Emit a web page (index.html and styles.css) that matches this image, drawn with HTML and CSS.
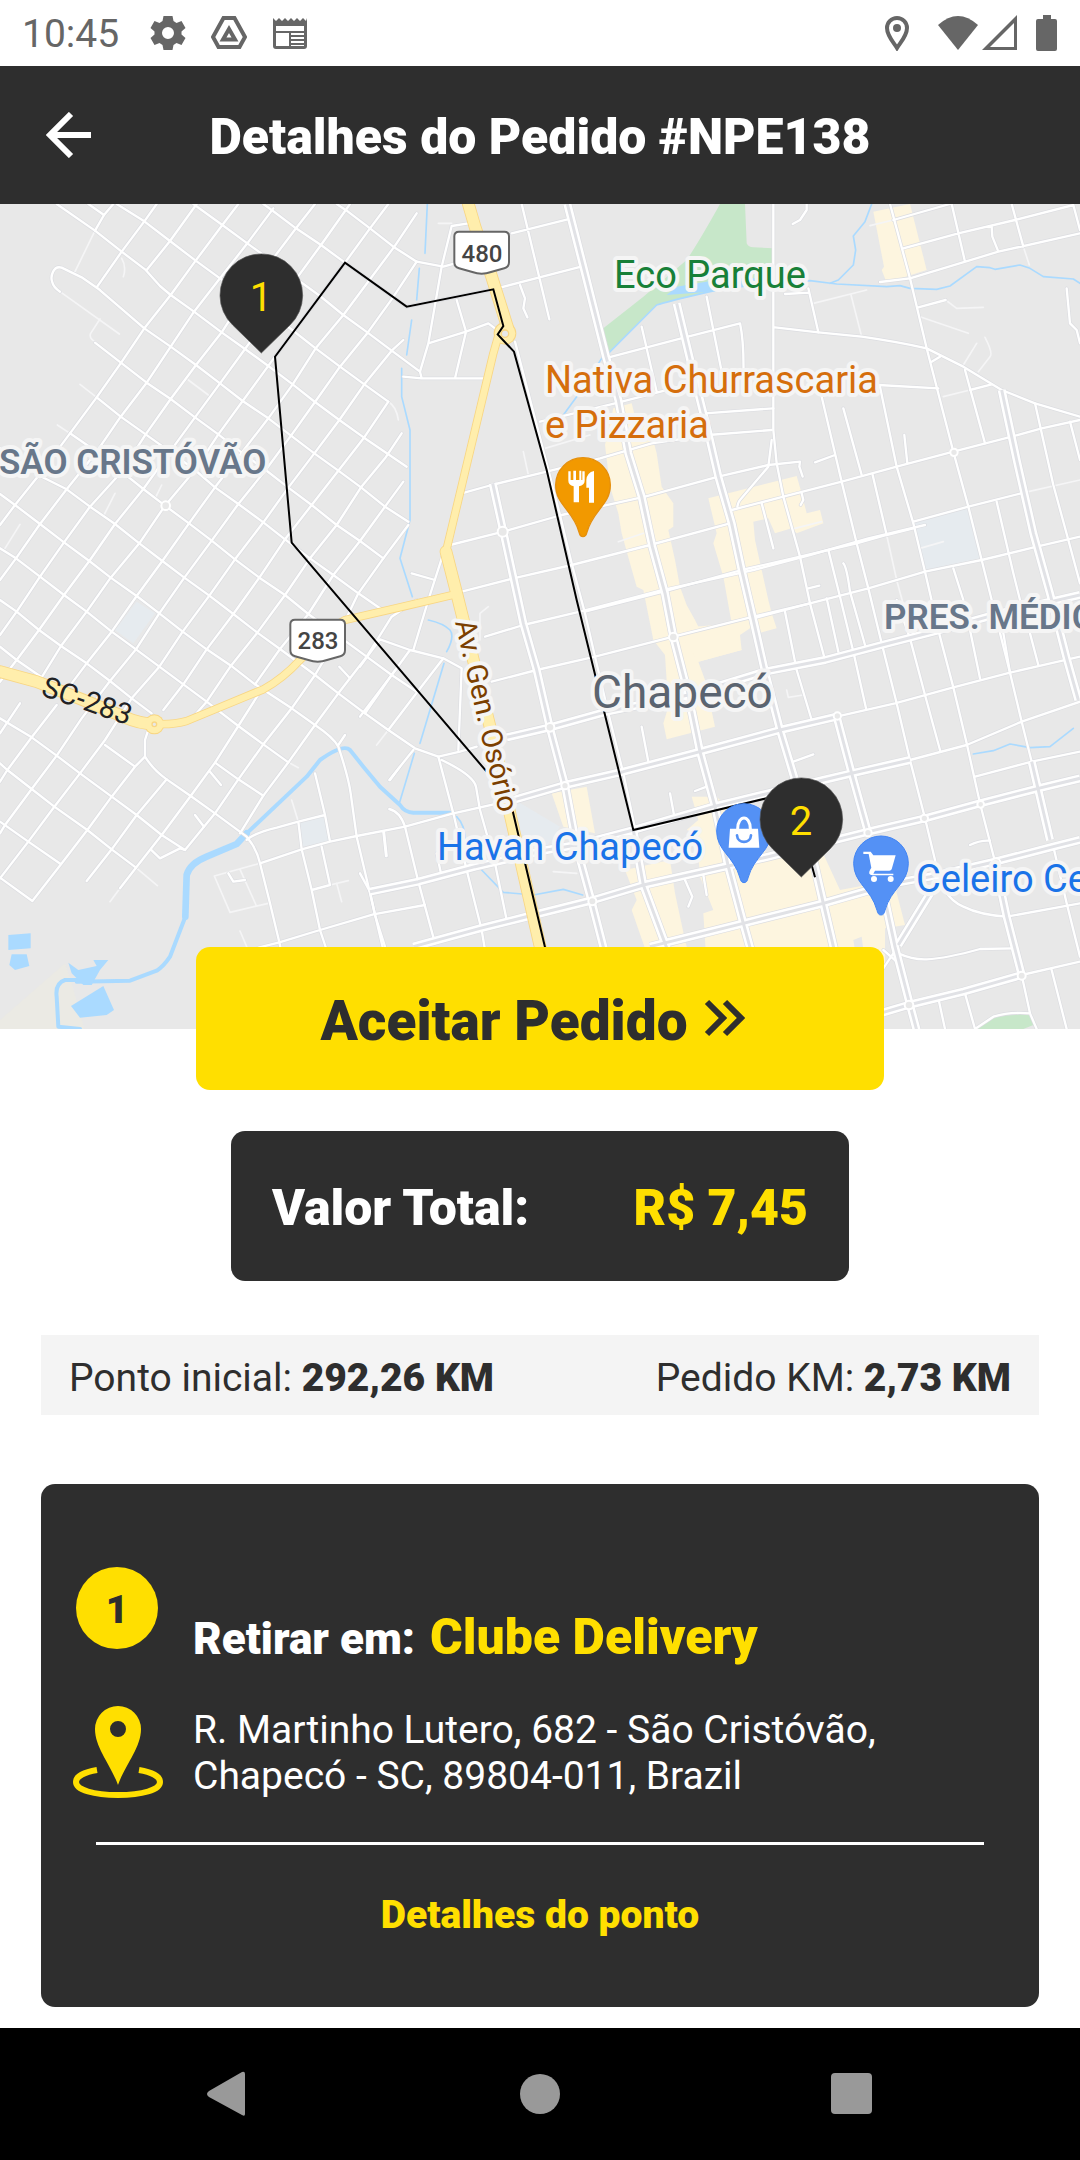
FILE: index.html
```html
<!DOCTYPE html>
<html lang="pt-BR">
<head>
<meta charset="utf-8">
<meta name="viewport" content="width=device-width, initial-scale=1">
<title>Detalhes do Pedido #NPE138</title>
<link rel="stylesheet" href="styles.css">
</head>
<body>
<div class="status-bar">
  <div class="status-left">
    <time class="clock">10:45</time>
    <svg class="status-icon" width="36" height="36" viewBox="0 0 36 36" aria-hidden="true"><path fill-rule="evenodd" d="M13.500 1h9l1 5 3 2 5-2 4 7-4 3.500v3l4 3.500-4 7-5-2-3 2-1 5h-9l-1-5-3-2-5 2-4-7 4-3.500v-3L.5 13l4-7 5 2 3-2ZM18 12a6 6 0 1 0 0 12 6 6 0 0 0 0-12Z"/></svg>
    <svg class="status-icon" width="36" height="36" viewBox="0 0 36 36" aria-hidden="true"><path class="line" d="M12.500 3h11L34 22l-5.500 10h-21L2 22Z"/><path class="line" d="m18 14 6 10.500H12Z"/></svg>
    <svg class="status-icon" width="36" height="36" viewBox="0 0 36 36" aria-hidden="true"><path fill-rule="evenodd" d="M1 3l3 3 3-3 3 3 3-3 3 3 3-3 3 3 3-3 3 3 3-3 3 3 1-3v28q0 3-3 3H4q-3 0-3-3ZM4 11v5h28v-5ZM4 18v13h13V18ZM19 18v2h13v-2ZM19 22v2h13v-2ZM19 26v2h13v-2ZM19 30v1h13v-1Z"/></svg>
  </div>
  <div class="status-right">
    <svg class="status-icon" width="26" height="36" viewBox="0 0 26 36" aria-hidden="true"><path class="line" d="M13 33C10 28 3 21 3 13a10 10 0 0 1 20 0c0 8-7 15-10 20Z"/><circle cx="13" cy="13" r="4"/></svg>
    <svg class="status-icon wifi" width="42" height="36" viewBox="0 0 42 36" aria-hidden="true"><path d="M1 10Q21-8 41 10L21 35Z"/></svg>
    <svg class="status-icon" width="36" height="36" viewBox="0 0 36 36" aria-hidden="true"><path fill-rule="evenodd" d="M35 0v35H0ZM32 8 8 32h24Z"/></svg>
    <svg class="status-icon battery" width="22" height="36" viewBox="0 0 22 36" aria-hidden="true"><path d="M7 0h8v4h4q2 0 2 2v28q0 2-2 2H2q-2 0-2-2V6q0-2 2-2h5Z"/></svg>
  </div>
</div>

<header class="app-bar">
  <button class="back" type="button" aria-label="Voltar"><svg width="46" height="46" viewBox="0 0 46 46"><path d="M45 23H5M25 2 4 23l21 21"/></svg></button>
  <h1 class="title">Detalhes do Pedido #NPE138</h1>
</header>

<main class="content">
<svg class="map" viewBox="0 0 1080 825" preserveAspectRatio="xMidYMid slice" role="img" aria-label="Mapa da rota em Chapecó">
<svg width="1080" height="825" viewBox="0 612 3240 2475">
<defs>
<g id="minor">
 <g transform="translate(0 600)">
  <path d="M265 12 312 45M170 12 285 92 365 155 435 208 480 258 512 285 582 335 665 397 735 447 805 498 878 553 945 606 1018 660 1092 713 1220 800"/>
  <path d="M350 12 433 64 510 123 587 182 660 235 873 387 947 445 1020 500 1093 553 1165 605"/>
  <path d="M580 12 667 75 742 130 960 288 1030 345 1103 398 1175 452 1260 515M790 12 815 30 888 85 963 135 1035 188 1220 320M1010 12 1040 32 1110 85 1180 140 1250 185"/>
  <path d="M290 262 433 385 512 440 588 495 660 550 728 603 805 655 873 707 943 760 1015 812 1083 862 1155 920 1225 965M300 270 245 232 185 203C160 195 150 230 157 247Q160 262 180 275"/>
  <path d="M285 428 440 548 512 597 585 652 655 703 725 758 797 810 865 863 935 915 1010 975 1080 1023 1150 1075"/>
  <path d="M290 592 362 650 437 703 510 755 585 810 645 862 715 912 790 967 855 1018 930 1075 1000 1125 1075 1180 1140 1225"/>
  <path d="M210 700 290 755 365 815 430 867 495 917 567 970 635 1022 705 1078 778 1133 855 1185 925 1242 1100 1370 1175 1425 1250 1475"/>
  <path d="M0 745 125 830 200 868 270 920 345 972 418 1030 487 1083 553 1133 628 1187 700 1242 772 1298 840 1347 945 1425 1015 1480 1095 1540 1165 1590 1245 1645 1315 1670 1380 1655 1430 1640"/>
  <path d="M0 882 45 915 120 972 192 1027 268 1083 332 1133 410 1188 478 1240 548 1295 620 1348 693 1397 765 1453 875 1525 945 1575Q1000 1612 1015 1640 1045 1730 1052 1780L1070 1910 1110 2080 1150 2250"/>
  <path d="M0 1045 48 1075 120 1130 192 1185 260 1235 335 1295 408 1348 478 1400 550 1453 620 1505 715 1578 790 1633 865 1687"/>
  <path d="M0 1200 50 1235 117 1290 183 1338 260 1390 330 1443 395 1495 455 1540M0 1340 50 1380 125 1432"/>
  <path d="M340 12 312 45 285 92M470 12 433 64 365 155 290 262M590 12 510 123 440 210M715 12 667 75 587 182 512 285 433 385 362 490 290 592 210 700 125 815 45 915 0 975"/>
  <path d="M820 25 742 130 660 235 582 335 512 440 440 548 362 650 290 755 200 868 120 972 48 1075 0 1140M945 12 888 85 740 280 665 397 588 495 512 597 437 703 365 815 270 920 192 1027 120 1130 50 1235 0 1305"/>
  <path d="M1050 12 963 135 735 447 660 550 585 652 510 755 430 867 345 972 268 1083 192 1185 117 1290 50 1380 0 1445M1165 12 1110 85 1035 188 825 470 728 603 655 703 585 810 495 917 418 1030 332 1133 260 1235 183 1338 125 1432M60 1510 0 1600"/>
  <path d="M1250 40 1183 140 1030 345 947 445 878 553 805 655 725 758 645 862 567 970 487 1083 410 1188 335 1295 260 1390 215 1450M170 1515 95 1612 22 1710 0 1745"/>
  <path d="M1250 185 1177 295 1103 398 1020 500 945 606 873 707 797 810 715 912 635 1022 553 1133 478 1240 408 1348 330 1443 245 1555 170 1667 95 1767 15 1875 0 1900"/>
  <path d="M1210 420 1175 452 1093 553 1018 660 943 760 865 863 790 967 705 1078 628 1187 548 1295 478 1400 395 1495 315 1620 240 1720 163 1820 85 1925 0 2035"/>
  <path d="M1165 605 1092 713 1015 812 935 915 855 1018 778 1133 700 1242 620 1348 550 1453 490 1530M1205 700 1155 775 1083 862 1010 975 930 1075 855 1185 772 1298 693 1397 620 1505 585 1545"/>
  <path d="M1210 845 1155 920 1080 1023 1000 1125 925 1242 840 1347 765 1453M790 1460 715 1578 645 1688 572 1788 485 1905 408 2003 360 2065M1225 975 1150 1075 1075 1180 1005 1325 945 1425 875 1525 790 1633 715 1738 645 1840 555 1950 540 1945 480 1975 452 1948"/>
 </g>
 <g transform="translate(0 1800)">
  <path d="M1250 0 1175 50 1100 170 1015 280 945 375 865 487 790 587 720 700M1230 150 1175 225 1095 340"/>
  <path d="M0 355 95 412 170 467 240 520 335 590 410 645 485 705 555 750M0 490 22 510 95 567 163 620 262 690 335 748 408 803M0 665 85 725 183 793M0 833 97 903 183 793 262 690 335 590 405 500 435 470M315 435 405 500M500 538 410 645 335 748 260 843"/>
  <path d="M443 395 435 420V470Q460 510 500 538L572 588 645 640 740 710Q770 745 780 790L810 910 838 1027 845 1060M645 488 715 538 790 587M630 515 663 555M585 645 612 680"/>
  <path d="M780 790 905 748 990 725 1070 708 1215 680 1360 640 1540 600M740 720Q760 700 830 683L895 665 975 645M945 520 975 645 990 725M895 665 905 748 935 870 960 990 980 1050M965 740 990 855 935 870M775 1043 838 1027 960 990 1120 943 1275 915M1150 695 1158 768M685 820 700 845 735 840M1018 200 1050 235M1035 405 1015 435M1200 500 1170 540"/>
 </g>
 <g transform="translate(1080 600)">
  <path d="M245 200 205 430 180 515 185 535H370M275 78 245 200M325 70 275 78M170 185 250 200 285 190M130 530 185 535M290 300 318 395 285 535M205 430 318 395 385 370 425 400M140 320 400 268 675 197M455 100 635 55M485 12 568 358M480 255 495 295 490 325 502 352"/>
  <path d="M465 425 560 790 600 945 635 1090 675 1240 705 1370 745 1540 790 1720 825 1885"/>
  <path d="M305 880 395 855 560 815 720 775 875 730 1045 705 1235 690M270 1035 430 995 605 945 855 890 1075 830 1225 795 1320 785 1318 800 1328 830M305 1175 460 1135 635 1095 870 1035 1110 970M675 1235 910 1175 1145 1110 1320 1070 1490 1030 1580 1005 1660 985"/>
  <path d="M540 665 765 610 960 560M735 475 975 412 1140 370Q1153 430 1150 540M845 380 890 575M1040 290 1060 390 1090 540M1035 640 1240 625M155 1120 225 1140M250 1060 205 1200 160 1350"/>
 </g>
 <g transform="translate(1080 1800)">
  <path d="M375 110 490 75 660 35 900 -28 1180 -90 1350 -135 1525 -185 1695 -225M395 245 530 210 705 170 940 110 1180 50 1350 10M0 200 60 118 150 150 250 175 305 205 295 450M0 350 110 205M250 175 165 285 85 390M160 450 88 540M235 470 280 640 320 810 365 990 375 1050M245 480Q340 525 348 560L360 630 405 790 440 960"/>
  <path d="M88 627Q120 635 135 680L175 845 225 1030M72 695 80 768M0 820 30 875 45 945 75 1040M845 380 865 485M1005 573 1040 560M930 580 943 650M975 840 997 890 985 920M1030 825 1040 885M230 760 245 830"/>
 </g>
 <g transform="translate(2040 600)">
  <path d="M280 12V690L290 790 310 890 360 1070 390 1210 435 1380M285 382 415 397 545 410 Q650 425 740 445L850 500 965 570 1065 610 1200 650M630 12 690 235 740 445 820 755 865 920 905 1080 945 1240 990 1418"/>
  <path d="M640 60 810 12M670 145 835 100 1005 60 1180 15M600 246 690 235 955 155 1200 100M815 12 855 185M995 12 1030 140M935 80 937 110 955 155M1180 15 1200 90M715 322 797 300M385 265 415 397M315 282 385 278M380 12V30L360 60 338 72M595 555 775 565M870 570 935 553M755 485 780 470M855 510 915 730"/>
  <path d="M425 590 485 845 530 1030 565 1165 605 1330M600 560 650 800 700 970 735 1115 780 1310 820 1462 860 1630 900 1810 945 1985M490 625 545 825M673 705 682 790M405 787 465 765M155 930 310 890 485 845 650 800 820 755 995 710 1085 685 1200 660M700 965 865 920 1035 877M220 1255 390 1210 565 1165 735 1115 905 1080 1070 1040 1200 1010"/>
  <path d="M172 920Q175 905 180 900L265 800 275 720M245 910 280 1045M578 825 620 1005M445 1050 480 1190 520 1355 558 1525M490 1090Q500 1100 510 1175L555 1335M385 1165 418 1157M365 880 370 900 362 915M950 905 1000 1120 1020 1200M820 1105 850 1200M1065 610 1120 855 1165 1020 1200 1150M1170 665 1200 780M1160 265 1170 370 1190 390 1200 430M440 1195 475 1355"/>
 </g>
 <g transform="translate(2040 1800)">
  <path d="M315 35 350 210 395 360M605 130 650 310 690 480 735 655 765 780Q780 890 850 920 900 945 980 950L1200 910M650 0 690 115 735 285 780 450M870 90 900 235M960 40 990 218 1025 365 1055 485M1050 100 1075 195M470 350 645 310 820 262 990 218 1200 170M690 480 860 435 1025 365 1200 305M885 530 1055 485 1200 455M340 485 400 463"/>
  <path d="M870 735Q900 720 930 722M655 1060Q700 1080 740 1078 800 1075 900 1047L1000 1045M775 1195 795 1287M855 1180 885 1287 940 1250Q990 1235 1050 1240L1070 1287M1115 1110 1160 1287M610 1050 650 1085M640 1060 600 1120M1025 1125 1050 1240M1025 1125 1200 1085M1120 740 1160 910 1200 1070"/>
 </g>
</g>
<g id="avenue">
 <g transform="translate(1080 600)">
  <path d="M622 12 670 200 738 470 775 600 805 760 845 890 877 1040 915 1180 940 1310 985 1485 1020 1655 1065 1820 1105 2000 1150 2170 1175 2260M950 310 1005 540 1045 700 1075 830 1115 970 1145 1110 1180 1260 1215 1415 1260 1590 1305 1740 1360 1980 1390 2110 1425 2260"/>
  <path d="M398 850 430 995 490 1270 530 1410 570 1585 615 1755 650 1940 695 2105 735 2260M820 1890 850 2055 915 2230 930 2270"/>
 </g>
 <g transform="translate(1080 1800)">
  <path d="M440 412 570 382 740 335 985 285 1215 215 1395 180 1565 135 1740 90 1920 40 2160 -15M460 600 615 555 790 515 1020 455 1260 390 1430 350M30 875 175 845 345 800 560 750 650 735 820 690 1060 620 1225 580 1390 540 1475 520 1650 480M160 1040 360 985 520 945 700 900 850 855 1095 800 1225 770 1525 695 1695 655 1860 610 2035 565 2160 535M870 1040 1150 970 1390 910 1600 850 1710 830 1905 785 2080 740 2160 720"/>
 </g>
 <g transform="translate(2040 1800)">
  <path d="M470 350 515 520 565 700M600 830 645 1040 690 1215 710 1290M750 880 655 1035M945 785 980 950 1025 1125M1055 485 1110 720M600 1240 685 1215 850 1175 1025 1125M965 -630 1010 -420 1060 -200 1110 -20 1160 175 1195 300"/>
 </g>
</g>
<g id="highway-wide"><path d="M0 2015 110 2045 250 2100 370 2150Q420 2172 463 2172"/><path d="M1405 612 1425 680 1475 830 1522 980M1338 1655 1370 1780 1410 1940 1485 2240 1525 2420 1625 2860"/></g>
<g id="highway"><path d="M463 2172Q520 2175 560 2163L640 2130 790 2068Q850 2035 900 1980L1000 1880 1035 1860 1200 1822 1370 1782"/><path d="M1480 1060 1338 1655M1480 1060 1500 990"/></g>
<path id="poi" d="M0 155C-8 155-10 149-12 141-30 75-82 60-82 0A82 82 0 1 1 82 0C82 60 30 75 12 141 10 149 8 155 0 155Z"/>
<path id="marker" d="M0 173-86 89A124 124 0 1 1 86 89Z"/>
<path id="shield" d="M-68-63H68Q82-63 82-49V29Q82 43 68 47L28 58Q0 68-28 58L-68 47Q-82 43-82 29V-49Q-82-63-68-63Z"/>
</defs>
<rect class="land" y="612" width="3240" height="2475"/>
<g class="commercial">
 <path d="M2620 635 2730 612 2780 810 2660 848 2645 810 2652 800Z"/>
 <path d="M1815 1335 1840 1225 1895 1210 1910 1270 1945 1265 1970 1360 1985 1460 2020 1510 2020 1580 2005 1590 2025 1680 2040 1760 2060 1815 2085 1860 2095 1880 2190 1880 2225 1950 2095 1985 2115 2040 2145 2180 2000 2218 1990 2170 2005 2120 1995 1965 1960 1920 1930 1770 1910 1760 1890 1690 1865 1600 1855 1540 1830 1460Z"/>
 <path d="M2125 1495 2390 1428 2405 1480 2420 1540 2460 1530 2470 1570 2390 1600 2375 1585 2325 1600 2305 1555 2260 1565 2265 1620 2285 1710 2305 1800 2315 1840 2330 1885 2280 1898 2250 1885 2220 1905 2225 1950 2095 1985 2040 1900 2090 1880 2195 1870 2170 1730 2140 1630 2150 1600Z"/>
 <path d="M1655 2380 1760 2360 1785 2500 1690 2480Z"/>
 <path d="M1875 2610 2010 2580 2025 2680 2055 2820 2065 2860 1940 2860 1895 2730 1910 2700Z"/>
 <path d="M2075 2390H2150L2200 2440 2300 2560 2460 2540 2520 2670 2680 2640 2715 2775 2655 2785V2900H2120L2110 2740 2140 2730 2100 2630 2090 2500 2060 2490 2095 2460Z"/>
</g>
<path class="land" d="M2560 2820 2585 2810 2590 2850H2565Z"/>
<path class="park" d="M2160 612H2235L2240 730Q2245 742 2260 742L2320 745V835L2180 862 1970 915 1825 1060 1810 985 1930 890 2060 780Q2100 720 2160 612ZM2930 3087 2980 3052Q3030 3038 3090 3042L3100 3075 3070 3087Z"/>
<path class="campus" d="M410 1805 465 1840 400 1930 345 1890ZM900 2465 975 2450 985 2525 905 2540ZM2740 1565 2905 1525 2940 1675 2775 1710ZM1545 2400 1680 2480 1640 2540 1540 2490Z"/>
<path class="sand" d="M195 2890 0 3060V3087H253L215 2950Z"/>
<g class="water-line">
 <path d="M1825 1060 1970 915Q2000 905 2130 875L2240 850 2430 842 2510 852 2660 860 2700 857 2730 865 2810 868 2850 858 2930 800 2970 803 2985 808 3060 795 3090 805 3130 830 3220 837 3240 850M2615 612 2595 665 2560 708 2567 750 2560 795 2515 840 2490 850"/>
 <path d="M1282 612 1275 760M1258 805 1250 900M1235 960 1220 1065M1205 1105V1190L1230 1290V1560L1200 1675 1237 1790M1815 1060 1730 1190 1690 1245M1285 1860Q1330 1870 1350 1890 1365 1910 1340 1955M1332 1990 1260 2230M1243 2260 1198 2410M1370 2450Q1400 2480 1395 2540M1445 2610 1510 2677 1600 2685 1690 2668 1748 2685M2920 2262 2980 2252 3030 2232 3090 2243 3150 2240 3220 2185"/>
</g>
<g class="river"><path d="M1350 2438H1240Q1215 2438 1200 2415L1140 2360 1090 2300 1050 2250Q1030 2230 960 2280L920 2330 740 2500"/><path class="river-wide" d="M740 2500 710 2532 620 2570Q570 2590 560 2625L556 2750"/><path d="M556 2750 510 2870Q490 2900 470 2912L390 2942 230 2945M240 2940 195 2940Q165 2950 170 2990L175 3080 240 3087"/></g>
<path class="water" d="M2000 885 2030 860 2180 835H2320V850L2130 875ZM25 2805 92 2800V2845L25 2850ZM35 2863H80L88 2898 45 2910 28 2895ZM205 2888 235 2910 290 2898 280 2880H325L300 2910 275 2955H250L215 2920ZM213 3018 310 2958 342 3030 320 3045 240 3053Z"/>
<path class="lane" d="M285 692 225 815M180 875 358 1002M300 957 272 1000Q265 1015 290 1028M240 1153 290 1192M172 1275 210 1300M565 1140 625 1185M60 1573 15 1645M1165 1205Q1190 1220 1195 1260M865 2287 895 2303M408 2603 472 2657M360 2665 330 2705M643 2628 690 2737 805 2710M643 2628 780 2590M720 2608 768 2715M875 2400 895 2465M990 2655 1045 2642M1010 2650 1025 2705M720 2793 740 2840M1200 2145 1130 2235M1315 670H1355M1635 1345 1770 1305M1570 1355 1585 1425M1855 1625 1930 1600M1440 1920V1840L1465 1820M1660 2615 1730 2620M2610 677 2680 660M3070 740 3088 795M2837 900 2870 925 2950 922M2760 950 2905 1000M2955 1012Q2980 1060 2970 1070L2935 1115M2930 1030 2890 1095M2440 910 2600 870M2553 885 2585 1010M2830 1190 2910 1170M3075 1477 3240 1440M2660 1605 2690 1740 2720 1850M2385 1585 2465 1565M2760 1645 2830 1625M2360 2070 2365 2092 2410 2085M345 1480 312 1545M485 1455 468 1490M365 775Q380 800 370 830"/>
<use href="#minor" class="street-edge"/><use href="#avenue" class="avenue-edge"/>
<use href="#minor" class="street"/><use href="#avenue" class="avenue"/><use href="#avenue" class="median"/>
<g class="roundabout"><circle cx="497" cy="1517" r="13"/><circle cx="1508" cy="1595" r="15"/><circle cx="1650" cy="2182" r="13"/><circle cx="1695" cy="2357" r="11"/><circle cx="1777" cy="2704" r="12"/><circle cx="2020" cy="1911" r="13"/><circle cx="2862" cy="1357" r="11"/><circle cx="2512" cy="2148" r="11"/><circle cx="2604" cy="2498" r="11"/><circle cx="2773" cy="2455" r="11"/><circle cx="2942" cy="2413" r="10"/><circle cx="2727" cy="3015" r="13"/><circle cx="3065" cy="2927" r="12"/><circle cx="2988" cy="2588" r="13"/></g>
<use href="#highway-wide" class="highway-wide-edge"/><use href="#highway" class="highway-edge"/><circle cx="1515" cy="1000" r="34" class="junction-edge"/><circle cx="463" cy="2173" r="30" class="junction-edge"/>
<use href="#highway-wide" class="highway-wide"/><use href="#highway" class="highway"/><circle cx="1515" cy="1000" r="31" class="junction"/><circle cx="463" cy="2173" r="27" class="junction"/>
<circle cx="1515" cy="1001" r="11" class="island"/><circle cx="463" cy="2173" r="7" class="island"/>
<path class="route" d="M1637 2850 1535 2420 1495 2360 1460 2315 875 1628 825 1070 1035 788 1220 920 1480 868 1510 978 1493 1003 1542 1055 1640 1410 1730 1800 1900 2490 2320 2390 2420 2540 2445 2632"/>
<use href="#shield" x="1445" y="758" class="shield"/><use href="#shield" x="953" y="1922" class="shield"/>
<use href="#poi" x="1749" y="1455" class="poi-food"/><use href="#poi" x="2232" y="2493" class="poi-shop"/><use href="#poi" x="2643" y="2590" class="poi-shop"/>
<path class="glyph" d="M1705 1414H1712V1440H1720V1412H1728V1440H1738V1412H1744V1440H1747V1414H1754V1442Q1754 1455 1737 1459V1507H1721V1459Q1705 1455 1705 1442ZM1782 1413V1508H1767V1463H1759V1440Q1761 1417 1782 1413ZM2190 2486H2274L2278 2543H2186Z"/>
<path class="bag" d="M2213 2486C2214 2443 2250 2443 2251 2486"/><path class="smile" d="M2211 2506C2213 2532 2251 2532 2253 2506"/>
<path class="glyph" d="M2590 2555H2612L2620 2566H2687L2675 2608Q2673 2612 2668 2612H2625L2620 2621H2680V2620 2626H2618Q2602 2625 2610 2610L2614 2603 2606 2562H2590Z"/><circle class="glyph" cx="2622" cy="2637" r="9"/><circle class="glyph" cx="2672" cy="2637" r="9"/>
</svg>
<text class="road-ref" x="482" y="58">480</text><text class="road-ref" x="318" y="445">283</text>
<text class="label park-name" x="614" y="84">Eco Parque</text>
<text class="label food-name" x="545" y="189">Nativa Churrascaria<tspan x="545" dy="45">e Pizzaria</tspan></text>
<text class="label district" x="-1" y="270">SÃO CRISTÓVÃO</text>
<text class="label district" x="884" y="425">PRES. MÉDICI</text>
<text class="label city" x="592" y="504">Chapecó</text>
<text class="label shop-name" x="437" y="656">Havan Chapecó</text>
<text class="label shop-name" x="916" y="688">Celeiro Ce</text>
<text class="label avenue-name" transform="translate(455 418) rotate(77)">Av. Gen. Osório</text>
<text class="highway-name" transform="translate(40 491) rotate(19)">SC-283</text>
<svg width="1080" height="825" viewBox="0 612 3240 2475"><use href="#marker" x="784" y="886" class="marker"/><use href="#marker" x="2404" y="2458" class="marker"/></svg>
<text class="marker-number" x="261" y="107">1</text><text class="marker-number" x="801" y="631">2</text>
</svg>

<button class="accept" type="button">Aceitar Pedido <svg width="42" height="38" viewBox="0 0 42 38" aria-hidden="true"><path d="m3 3 16 16L3 35M21 3l16 16-16 16"/></svg></button>

<section class="total"><span>Valor Total:</span><strong class="price">R$ 7,45</strong></section>

<section class="distances">
  <p>Ponto inicial: <strong>292,26 KM</strong></p>
  <p>Pedido KM: <strong>2,73 KM</strong></p>
</section>

<section class="stop">
  <div class="stop-head">
    <span class="badge">1</span>
    <h2 class="stop-title">Retirar em: <span class="stop-name">Clube Delivery</span></h2>
  </div>
  <div class="stop-address">
    <svg class="pin" width="90" height="92" viewBox="0 0 90 92" aria-hidden="true"><path class="pin-body" fill-rule="evenodd" d="M45 79C38 59 22 42 22 23a23 23 0 0 1 46 0c0 19-16 36-23 56ZM45 15a8 8 0 1 0 0 16 8 8 0 0 0 0-16Z"/><path class="pin-ring" d="M24 64C12 66 3 70 3 76c0 8 18 13 42 13s42-5 42-13c0-6-9-10-21-12"/></svg>
    <address>R. Martinho Lutero, 682 - São Cristóvão, Chapecó - SC, 89804-011, Brazil</address>
  </div>
  <hr class="divider">
  <a class="details" href="#ponto">Detalhes do ponto</a>
</section>
</main>

<nav class="system-nav" aria-label="Sistema">
  <button type="button" aria-label="Voltar"><svg width="46" height="46" viewBox="0 0 46 46"><path d="M41 3v40q0 3-3 1L5 26q-4-3 0-6L38 1q3-1 3 2Z"/></svg></button>
  <button type="button" aria-label="Início"><svg width="46" height="46" viewBox="0 0 46 46"><circle cx="23" cy="23" r="20"/></svg></button>
  <button type="button" aria-label="Recentes"><svg width="46" height="46" viewBox="0 0 46 46"><rect x="1" y="2" width="41" height="41" rx="4"/></svg></button>
</nav>
</body>
</html>
```
FILE: styles.css
```css
* { box-sizing: border-box; }

body {
  margin: 0;
  min-height: 100vh;
  display: flex;
  flex-direction: column;
  background: #fff;
  color: #2e2e2e;
  font-family: Roboto, "Liberation Sans", sans-serif;
  font-size: 39px;
  line-height: 46px;
}

button { border: 0; padding: 0; background: none; font: inherit; color: inherit; }
h1, h2, p { margin: 0; }
strong { font-weight: 900; }

/* Status bar */
.status-bar {
  height: 66px;
  padding: 0 22px;
  display: flex;
  align-items: center;
  justify-content: space-between;
  color: #666;
}
.status-left { display: flex; align-items: center; gap: 25px; }
.clock { margin-right: 6px; padding-top: 2px; }
.status-right { display: flex; align-items: center; }
.status-icon { display: block; fill: currentColor; }
.status-icon .line { fill: none; stroke: currentColor; stroke-width: 4; }
.wifi { margin-left: 27px; margin-right: 3px; }
.battery { margin-left: 18px; }

/* Title bar */
.app-bar {
  min-height: 138px;
  padding: 0 46px;
  display: grid;
  grid-template-columns: 46px 1fr 46px;
  align-items: center;
  background: #2e2e2e;
  color: #fff;
}
.back svg { display: block; fill: none; stroke: currentColor; stroke-width: 6; }
.title { padding-top: 4px; text-align: center; font-size: 50px; line-height: 60px; font-weight: 900; }

/* Map */
.content { display: flex; flex-direction: column; flex: 1; }
.map { display: block; width: 100%; height: 825px; }
.land { fill: #e8e8e8; }
.commercial { fill: #fdf5df; }
.park { fill: #c7e7c9; }
.campus { fill: #e6ebef; }
.sand { fill: #ebeae4; }
.water { fill: #aadaff; }
.water-line, .river, .lane, .street, .street-edge, .avenue, .avenue-edge, .median,
.highway, .highway-edge, .highway-wide, .highway-wide-edge, .route, .bag, .smile {
  fill: none;
  stroke-linejoin: round;
  stroke-linecap: round;
}
.water-line { stroke: #aadaff; stroke-width: 5; }
.river { stroke: #aadaff; stroke-width: 12; }
.river-wide { stroke-width: 20; }
.lane { stroke: #f5f5f6; stroke-width: 5; }
.street-edge { stroke: #dcdde1; stroke-width: 11; }
.street { stroke: #fff; stroke-width: 7; }
.avenue-edge { stroke: #dcdde1; stroke-width: 28; stroke-linecap: butt; }
.avenue { stroke: #fff; stroke-width: 24; stroke-linecap: butt; }
.median { stroke: #e1e2e6; stroke-width: 9; stroke-linecap: butt; }
.roundabout { fill: #e8e8e8; stroke: #fff; stroke-width: 6; }
.highway-edge { stroke: #f8d684; stroke-width: 25; }
.highway { stroke: #ffeeac; stroke-width: 20; }
.highway-wide-edge { stroke: #f8d684; stroke-width: 38; }
.highway-wide { stroke: #ffeeac; stroke-width: 33; }
.junction-edge { fill: #f8d684; }
.junction { fill: #ffeeac; }
.island { fill: #e8e8e8; stroke: #f8d684; stroke-width: 4; }
.route { stroke: #000; stroke-width: 6; stroke-linejoin: miter; stroke-linecap: butt; }
.shield { fill: #fff; stroke: #666; stroke-width: 6; }
.poi-food { fill: #f29900; stroke: #e58f0c; stroke-width: 4; }
.poi-shop { fill: #5491f5; stroke: #4285f4; stroke-width: 3; }
.glyph { fill: #fff; }
.bag { stroke: #fff; stroke-width: 9; }
.smile { stroke: #5491f5; stroke-width: 8; }
.marker { fill: #2e2e2e; stroke: #555; stroke-width: 2; }

.label { font-size: 38px; paint-order: stroke; stroke: #f5f5f5; stroke-width: 8px; stroke-linejoin: round; }
.park-name { fill: #188038; }
.food-name { fill: #d56e0c; }
.shop-name { fill: #1a73e8; }
.district { font-weight: 600; font-size: 35px; fill: #68778a; }
.city { font-size: 46px; fill: #5b6470; }
.avenue-name { font-size: 29px; fill: #7b3f00; }
.highway-name { font-size: 29px; fill: #202124; }
.road-ref { font-size: 24px; font-weight: 500; fill: #444; text-anchor: middle; }
.marker-number { font-size: 40px; fill: #ffdf00; text-anchor: middle; }

/* Accept button, overlapping the map edge */
.accept {
  width: calc(100% - 392px);
  min-height: 143px;
  margin: -82px auto 0;
  position: relative;
  display: flex;
  align-items: center;
  justify-content: center;
  gap: 16px;
  padding: 4px 14px 0 0;
  border-radius: 14px;
  background: #ffdf00;
  font-size: 55px;
  line-height: 64px;
  font-weight: 900;
}
.accept svg { fill: none; stroke: currentColor; stroke-width: 6; margin-bottom: 6px; }

.total {
  width: calc(100% - 462px);
  min-height: 150px;
  margin: 41px auto 0;
  padding: 4px 41px 0;
  display: flex;
  align-items: center;
  justify-content: space-between;
  border-radius: 14px;
  background: #2e2e2e;
  color: #fff;
  font-size: 50px;
  line-height: 60px;
  font-weight: 900;
}
.price { color: #ffdf00; }

.distances {
  margin: 54px 41px 0;
  min-height: 80px;
  padding: 6px 28px 0;
  display: flex;
  align-items: center;
  justify-content: space-between;
  background: #f4f4f4;
}

/* Stop card */
.stop {
  margin: 69px 41px 21px;
  padding: 83px 32px 69px;
  display: flex;
  flex-direction: column;
  border-radius: 14px;
  background: #2e2e2e;
  color: #fff;
}
.stop-head { display: flex; align-items: flex-start; gap: 35px; padding-left: 3px; }
.badge {
  width: 82px;
  height: 82px;
  padding-top: 4px;
  border-radius: 50%;
  display: flex;
  align-items: center;
  justify-content: center;
  background: #ffdf00;
  color: #2e2e2e;
  font-weight: 900;
}
.stop-title { padding-top: 40px; font-size: 44px; line-height: 60px; font-weight: 900; }
.stop-name { margin-left: 4px; font-size: 50px; color: #ffdf00; }
.stop-address { display: flex; align-items: center; gap: 30px; margin-top: 36px; }
.stop-address address { flex: 1; max-width: 740px; padding-top: 2px; font-style: normal; }
.pin-body { fill: #ffdf00; }
.pin-ring { fill: none; stroke: #ffdf00; stroke-width: 6; }
.divider { width: calc(100% - 46px); margin: 43px auto 47px; border: 0; height: 3px; background: #fff; }
.details { align-self: center; color: #ffdf00; font-weight: 900; text-decoration: none; }

/* System navigation */
.system-nav {
  height: 132px;
  padding: 0 70px;
  display: grid;
  grid-template-columns: repeat(3, 1fr);
  place-items: center;
  background: #000;
}
.system-nav svg { display: block; fill: #999; }
```
